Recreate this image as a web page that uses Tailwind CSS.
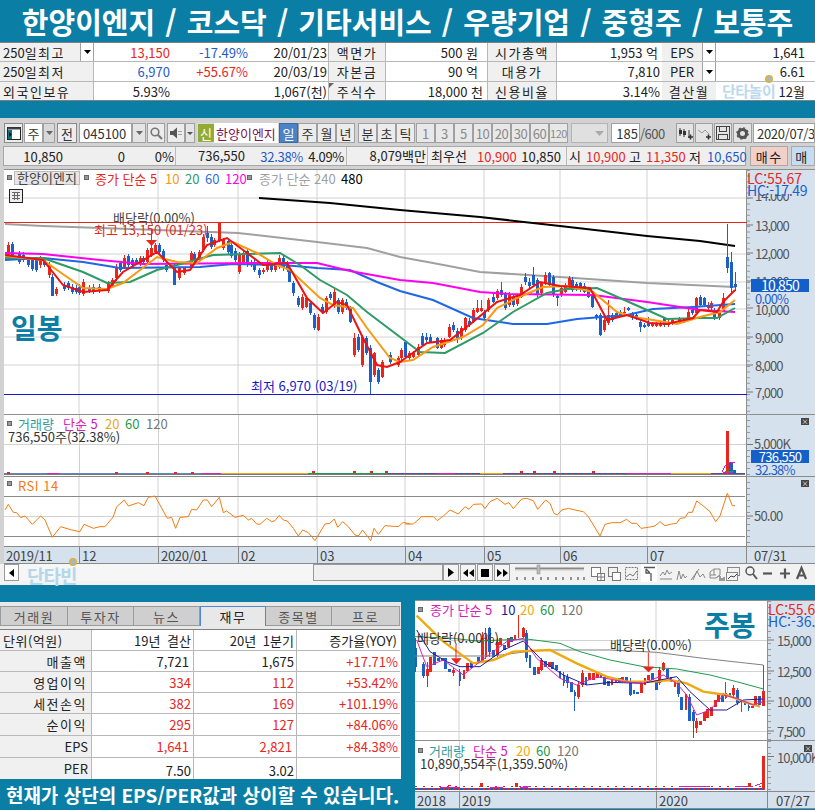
<!DOCTYPE html>
<html lang="ko"><head><meta charset="utf-8"><title>한양이엔지</title>
<script src="https://cdn.jsdelivr.net/npm/@tailwindcss/browser@4"></script></head>
<body class="bg-[#0b7ea5]">
<div class="w-[815px] h-[810px] overflow-hidden flex flex-col bg-[#0b7ea5] font-['Noto_Sans_CJK_KR',sans-serif] text-[13px] leading-none text-[#222]">

<!-- title -->
<div class="h-[42px] shrink-0 flex items-center justify-center text-white font-bold text-[29px] [word-spacing:2px] whitespace-nowrap">한양이엔지 / 코스닥 / 기타서비스 / 우량기업 / 중형주 / 보통주</div>

<!-- summary table -->
<div class="relative h-[59px] shrink-0 bg-white flex flex-col border-t border-[#808080] whitespace-nowrap">
  <div class="flex h-[19px] border-b border-[#b8b8b8]">
    <div class="w-[80px] bg-[#f0f0f0] flex items-center pl-[3px]"><span>250</span><span class="tracking-[1.5px]">일최고</span></div>
    <div class="w-[14px] bg-white border-x border-[#a0a0a0] flex items-center justify-center"><svg width="7" height="4"><polygon points="0,0 7,0 3.5,4" fill="#000"/></svg></div>
    <div class="w-[76px] text-right self-center text-[#e8261c]">13,150</div>
    <div class="w-[78px] text-right self-center text-[#1e5bc6]">-17.49%</div>
    <div class="w-[79px] text-right self-center">20/01/23</div>
    <div class="ml-[1px] w-[58px] bg-[#f0f0f0] border-x border-[#b8b8b8] flex items-center justify-center tracking-[1.5px]">액면가</div>
    <div class="w-[101px] text-right self-center pr-[9px]">500 원</div>
    <div class="w-[70px] bg-[#f0f0f0] border-x border-[#b8b8b8] flex items-center justify-center tracking-[1.5px]">시가총액</div>
    <div class="w-[105px] text-right self-center pr-[4px]">1,953 억</div>
    <div class="w-[40px] bg-[#f0f0f0] flex items-center justify-center">EPS</div>
    <div class="w-[14px] bg-white border-x border-[#a0a0a0] flex items-center justify-center"><svg width="7" height="4"><polygon points="0,0 7,0 3.5,4" fill="#000"/></svg></div>
    <div class="w-[99px] text-right self-center pr-[10px]">1,641</div>
  </div>
  <div class="flex h-[20px] border-b border-[#b8b8b8]">
    <div class="w-[94px] bg-[#f0f0f0] border-r border-[#b8b8b8] flex items-center pl-[3px]"><span>250</span><span class="tracking-[1.5px]">일최저</span></div>
    <div class="w-[76px] text-right self-center text-[#1e5bc6]">6,970</div>
    <div class="w-[78px] text-right self-center text-[#e8261c]">+55.67%</div>
    <div class="w-[79px] text-right self-center">20/03/19</div>
    <div class="ml-[1px] w-[58px] bg-[#f0f0f0] border-x border-[#b8b8b8] flex items-center justify-center tracking-[1.5px]">자본금</div>
    <div class="w-[101px] text-right self-center pr-[9px]">90 억</div>
    <div class="w-[70px] bg-[#f0f0f0] border-x border-[#b8b8b8] flex items-center justify-center tracking-[1.5px]">대용가</div>
    <div class="w-[105px] text-right self-center pr-[2px]">7,810</div>
    <div class="w-[40px] bg-[#f0f0f0] flex items-center justify-center">PER</div>
    <div class="w-[14px] bg-white border-x border-[#a0a0a0] flex items-center justify-center"><svg width="7" height="4"><polygon points="0,0 7,0 3.5,4" fill="#000"/></svg></div>
    <div class="w-[99px] text-right self-center pr-[10px]">6.61</div>
  </div>
  <div class="relative flex h-[19px] border-b border-[#808080]">
    <div class="w-[94px] bg-[#f0f0f0] border-r border-[#b8b8b8] flex items-center pl-[3px] tracking-[1.5px]">외국인보유</div>
    <div class="w-[76px] text-right self-center">5.93%</div>
    <div class="w-[157px] text-right self-center">1,067(천)</div>
    <div class="relative ml-[1px] w-[58px] bg-[#f0f0f0] border-x border-[#b8b8b8] flex items-center justify-center tracking-[1.5px]"><svg class="absolute left-[0px] top-[1px]" width="5" height="5"><polygon points="0,0 5,0 0,5" fill="#666"/></svg>주식수</div>
    <div class="w-[101px] text-right self-center pr-[4px]">18,000 천</div>
    <div class="w-[70px] bg-[#f0f0f0] border-x border-[#b8b8b8] flex items-center justify-center tracking-[1.5px]">신용비율</div>
    <div class="w-[105px] text-right self-center pr-[2px]">3.14%</div>
    <div class="w-[54px] bg-[#f0f0f0] flex items-center justify-center tracking-[1.5px]">결산월</div>
    <div class="w-[99px] text-right self-center pr-[10px]">12월</div>
    <div class="absolute left-[722px] top-[1px] w-[52px] h-[18px] text-[#bcd9ec] font-bold text-[15px] tracking-[-0.5px]">단타놀이</div>
    <div class="absolute left-[765px] top-[-7px] w-[8px] h-[8px] rounded-full border-2 border-[#d9b04e] bg-[#9cb8de]"></div>
  </div>
</div>

<div class="h-[17px] shrink-0"></div>

<!-- app window -->
<div class="h-[467px] shrink-0 bg-[#d2d2d2] flex flex-col pt-[5px]">
  <!-- toolbar -->
  <div class="h-[20px] shrink-0 flex pl-[4px] whitespace-nowrap text-[#333]">
    <div class="w-[19px] border border-[#8a8a8a] bg-[#ececec] flex items-center justify-center"><svg width="14" height="13"><rect x=".5" y=".5" width="13" height="12" fill="#fff" stroke="#222"/><rect x=".5" y=".5" width="13" height="2" fill="#444"/><rect x="1" y="3" width="4" height="9" fill="#178"/><polygon points="2,5 5,7.5 2,10" fill="#111"/></svg></div>
    <div class="ml-[1px] w-[19px] bg-white border border-[#a0a0a0] flex items-center justify-center">주</div>
    <div class="w-[12px] bg-[#d8d8d8] border border-[#a0a0a0] flex items-center justify-center"><svg width="7" height="4"><polygon points="0,0 7,0 3.5,4" fill="#666"/></svg></div>
    <div class="ml-[2px] w-[20px] bg-[#ececec] border border-[#8a8a8a] flex items-center justify-center">전</div>
    <div class="ml-[2px] w-[53px] bg-white border border-[#a0a0a0] flex items-center pl-[3px]">045100</div>
    <div class="w-[14px] bg-[#e4e4e4] border border-[#a0a0a0] flex items-center justify-center"><svg width="7" height="4"><polygon points="0,0 7,0 3.5,4" fill="#666"/></svg></div>
    <div class="ml-[1px] w-[18px] bg-[#ececec] border border-[#a0a0a0] flex items-center justify-center"><svg width="13" height="13" fill="none" stroke="#777" stroke-width="1.6"><circle cx="5" cy="5" r="3.8"/><path d="M8 8l4 4" stroke-width="2.2"/></svg></div>
    <div class="ml-[2px] w-[18px] bg-[#ececec] border border-[#a0a0a0] flex items-center justify-center"><svg width="13" height="12"><path d="M0 4h3l4-3.5v11L3 8H0z" fill="#555"/><path d="M9 4v1M9 7v1M11 4v1M11 7v1" stroke="#555"/></svg></div>
    <div class="w-[10px] bg-[#e4e4e4] border border-[#a0a0a0] flex items-center justify-center"><svg width="6" height="3"><polygon points="0,0 6,0 3,3" fill="#555"/></svg></div>
    <div class="ml-[2px] w-[17px] bg-[#93ab35] text-white flex items-center justify-center border-y border-l border-[#ddd]">신</div>
    <div class="w-[64px] bg-white text-[#7d1450] flex items-center pl-[2px] overflow-hidden">한양이엔지</div>
    <div class="ml-[1px] w-[19px] bg-[#4c82c6] text-white border border-[#3a6aa8] flex items-center justify-center">일</div>
    <div class="w-[19px] bg-[#ececec] border border-[#a0a0a0] flex items-center justify-center">주</div>
    <div class="w-[19px] bg-[#ececec] border border-[#a0a0a0] flex items-center justify-center">월</div>
    <div class="w-[19px] bg-[#ececec] border border-[#a0a0a0] flex items-center justify-center">년</div>
    <div class="ml-[3px] w-[19px] bg-[#ececec] border border-[#a0a0a0] flex items-center justify-center">분</div>
    <div class="w-[19px] bg-[#ececec] border border-[#a0a0a0] flex items-center justify-center">초</div>
    <div class="w-[19px] bg-[#ececec] border border-[#a0a0a0] flex items-center justify-center">틱</div>
    <div class="ml-[1px] w-[19px] bg-[#e8e8e8] border border-[#a0a0a0] text-[#888] flex items-center justify-center">1</div>
    <div class="w-[19px] bg-[#e8e8e8] border border-[#a0a0a0] text-[#888] flex items-center justify-center">3</div>
    <div class="w-[19px] bg-[#e8e8e8] border border-[#a0a0a0] text-[#888] flex items-center justify-center">5</div>
    <div class="w-[19px] bg-[#e8e8e8] border border-[#a0a0a0] text-[#888] flex items-center justify-center tracking-[-.5px]">10</div>
    <div class="w-[19px] bg-[#e8e8e8] border border-[#a0a0a0] text-[#888] flex items-center justify-center tracking-[-.5px]">20</div>
    <div class="w-[19px] bg-[#e8e8e8] border border-[#a0a0a0] text-[#888] flex items-center justify-center tracking-[-.5px]">30</div>
    <div class="w-[19px] bg-[#e8e8e8] border border-[#a0a0a0] text-[#888] flex items-center justify-center tracking-[-.5px]">60</div>
    <div class="w-[19px] bg-[#e8e8e8] border border-[#a0a0a0] text-[#888] flex items-center justify-center text-[11px] tracking-[-.5px]">120</div>
    <div class="ml-[3px] w-[37px] bg-[#e0e0e0] border border-[#b4b4b4] flex items-center justify-end pr-[3px]"><svg width="9" height="5"><polygon points="0,0 9,0 4.5,5" fill="#aaa"/></svg></div>
    <div class="ml-[3px] w-[29px] bg-white border border-[#a0a0a0] flex items-center justify-end pr-[1px]">185</div>
    <div class="w-[24px] flex items-center text-[#555] tracking-[-.5px]">/600</div>
    <div class="ml-[12px] w-[18px] bg-[#e4e4e4] border border-[#a0a0a0] flex items-center justify-center"><svg width="15" height="13"><path d="M2 1v8M6 2v8M11 3v8" stroke="#333"/><rect x="1" y="3" width="3" height="4" fill="#333"/><rect x="5" y="4" width="3" height="4" fill="#333"/><path d="M10 10h5M12.500 7.500v5" stroke="#333" stroke-width="1.600"/></svg></div>
    <div class="ml-[1px] w-[18px] bg-[#e4e4e4] border border-[#a0a0a0] flex items-center justify-center"><svg width="15" height="13" fill="none"><path d="M1 3l4 3 3-3 4 4" stroke="#999"/><path d="M9 10h5M11.500 7.500v5" stroke="#333" stroke-width="1.600"/></svg></div>
    <div class="ml-[1px] w-[18px] bg-[#e4e4e4] border border-[#a0a0a0] flex items-center justify-center"><svg width="14" height="14" fill="none" stroke="#444"><rect x=".5" y=".5" width="13" height="13"/><rect x="3.500" y=".5" width="7" height="5"/><rect x="2.500" y="8.500" width="9" height="5"/></svg></div>
    <div class="ml-[1px] w-[19px] bg-[#e4e4e4] border border-[#a0a0a0] flex items-center justify-center"><svg width="13" height="13"><circle cx="6.500" cy="6.500" r="4" fill="none" stroke="#555" stroke-width="3"/><circle cx="6.500" cy="6.500" r="5.500" fill="none" stroke="#555" stroke-width="1.600" stroke-dasharray="2 2.300"/></svg></div>
    <div class="ml-[1px] w-[62px] bg-white border border-[#a0a0a0] flex items-center pl-[3px] overflow-hidden tracking-[-.3px]">2020/07/31</div>
  </div>

  <!-- quote strip -->
  <div class="mt-[3px] h-[20px] shrink-0 flex pl-[3px] whitespace-nowrap">
    <div class="w-[749px] bg-[#efefef] border border-[#a8a8a8] flex items-center">
      <span class="w-[59px] text-right">10,850</span>
      <span class="w-[62px] text-right">0</span>
      <span class="w-[49px] text-right">0%</span>
      <span class="ml-[1px] h-full border-l border-[#bbb] w-[70px] text-right leading-[18px]">736,550</span>
      <span class="w-[58px] text-right text-[#1e5bc6] tracking-[-.3px]">32.38%</span>
      <span class="w-[41px] text-right tracking-[-.3px]">4.09%</span>
      <span class="ml-[2px] h-full border-l border-[#bbb] w-[80px] text-right leading-[18px]">8,079백만</span>
      <span class="ml-[1px] h-full border-l border-[#bbb] pl-[3px] w-[50px] leading-[18px]">최우선</span>
      <span class="w-[34px] text-[#e8261c]">10,900</span>
      <span class="w-[50px] text-right">10,850</span>
      <span class="ml-[5px] h-full border-l border-[#bbb] pl-[2px] w-[20px] leading-[18px]">시</span>
      <span class="w-[34px] text-[#e8261c]">10,900</span>
      <span class="ml-[9px] w-[17px]">고</span>
      <span class="w-[35px] text-[#e8261c]">11,350</span>
      <span class="ml-[8px] w-[18px]">저</span>
      <span class="w-[35px] text-[#1e5bc6]">10,650</span>
    </div>
    <div class="ml-[4px] w-[38px] bg-[#f2cfc8] border border-[#a8a8a8] flex items-center justify-center tracking-[1.5px]">매수</div>
    <div class="ml-[3px] w-[24px] bg-[#c6dcf3] border border-[#a8a8a8] flex items-center pl-[3px]">매</div>
  </div>

  <!-- daily price panel -->
  <div class="relative mt-[3px] h-[245px] shrink-0 flex pl-[4px]">
    <div class="w-[743px] bg-white"></div>
    <div class="flex-1 bg-[#d6e1ee]"></div>
    <svg class="absolute left-0 top-0" width="815" height="245" viewBox="0 169 815 245" fill="none">
      <path d="M4 198H747M4 254H747M4 282H747M4 309H747M4 337H747M4 365H747M79 169V414M158 169V414M238 169V414M317 169V414M405 169V414M484 169V414M560 169V414M647 169V414" stroke="#d2d2d2"/>
      <path d="M4 169.500H815M746.500 169V414" stroke="#8e8e8e"/>
      <path d="M4 222.500H747" stroke="#e8261c"/><path d="M4 394.500H747" stroke="#1818c8"/>
      <path d="M747 198h6M747 225h6M747 253h6M747 281h6M747 308h6M747 337h6M747 365h6M747 392h6" stroke="#777"/>
      <path d="M748.500 170V414" stroke="#999" stroke-width="3" stroke-dasharray="1 4.600"/>
      <polyline stroke="#000" stroke-width="2" points="259,198 330,203 400,210 480,217 560,226 647,236 700,241 735,246"/>
      <polyline stroke="#a0a0a0" stroke-width="2" points="5,224 43,226 130,229 238,233 317,242 367,248 400,257 433,263 480,272 560,277 647,283 735,287"/>
      <g stroke-linecap="butt" shape-rendering="crispEdges">
      <g transform="translate(0 165) scale(.33333)">
        <path stroke="#e8261c" stroke-width="3" d="M25 232V283M122 272V308M150 290V340M170 365V392M250 342V392M325 348V384M337 338V368M350 298V348M373 270V312M422 272V302M442 248V298M455 240V275M466 235V268M540 305V345M555 305V330M575 258V312M598 255V290M610 208V262M645 218V246M658 172V232M670 218V255M718 260V328M730 258V298M790 308V328M803 282V322M828 292V320M838 270V312M907 388V436M920 392V430M955 448V498M980 392V446M1003 372V428M1028 400V446M1063 505V575M1088 510V605M1124 560V636M1148 585V640M1195 572V606"/>
        <path stroke="#1c5fc8" stroke-width="3" d="M37 232V276M60 258V296M72 262V292M85 278V306M97 278V318M110 278V322M135 278V306M157 328V392M195 350V378M207 348V376M218 358V386M230 360V386M240 358V390M268 360V384M280 358V386M300 358V384M362 288V322M385 268V306M397 278V306M410 278V300M432 272V296M478 235V268M490 252V290M500 292V320M525 298V360M585 262V292M622 183V232M635 208V252M685 222V266M695 232V278M708 250V292M742 250V306M755 284V306M765 282V320M778 308V338M815 288V320M850 272V318M862 288V322M870 304V352M882 348V392M895 392V426M932 408V450M943 445V495M967 418V446M992 382V406M1016 398V446M1040 402V436M1052 424V475M1076 508V560M1100 512V570M1112 540V687M1136 608V658M1172 562V596"/>
        <path stroke="#e8261c" stroke-width="9" d="M25 240V275M122 282V300M150 300V330M170 372V388M250 350V388M325 355V378M337 345V362M350 305V340M373 278V305M422 280V295M442 255V290M455 250V270M466 240V262M540 310V338M555 310V325M575 265V305M598 262V285M610 215V255M645 225V240M658 172V225M670 225V248M718 268V320M730 265V292M790 315V322M803 290V315M828 300V315M838 278V305M907 395V430M920 400V425M955 455V495M980 400V440M1003 380V420M1028 405V440M1063 520V570M1088 515V600M1124 565V630M1148 590V635M1195 580V600"/>
        <path stroke="#1c5fc8" stroke-width="9" d="M37 238V270M60 265V290M72 270V285M85 285V300M97 285V312M110 285V315M135 285V300M157 335V392M195 360V372M207 355V370M218 365V380M230 368V380M240 365V385M268 368V378M280 365V380M300 365V378M362 295V315M385 272V300M397 285V300M410 285V295M432 280V290M478 240V262M490 258V285M500 300V315M525 305V360M585 268V285M622 205V218M635 215V245M685 228V260M695 240V272M708 258V285M742 258V300M755 290V300M765 290V315M778 315V330M815 295V315M850 278V310M862 295V315M870 310V350M882 355V385M895 400V420M932 415V445M943 450V490M967 425V440M992 388V400M1016 405V440M1040 410V430M1052 430V470M1076 515V555M1100 520V565M1112 550V650M1136 615V650M1172 570V590"/>
      </g>
      <g transform="translate(400 165) scale(.33333)">
        <path stroke="#e8261c" stroke-width="3" d="M5 550V585M30 558V584M42 558V580M55 538V575M125 518V552M135 518V545M150 478V520M185 482V525M197 455V500M220 430V475M232 405V445M245 405V442M267 398V440M292 372V405M328 380V425M352 392V422M364 358V400M424 350V390M436 322V360M484 365V395M496 355V385M508 332V370M613 458V500M625 405V480M673 425V450M757 470V485M770 470V485M782 472V485M805 462V485M818 460V480M840 455V475M865 430V462M890 395V450M925 412V435M935 408V435M958 435V465M970 385V442"/>
        <path stroke="#1c5fc8" stroke-width="3" d="M18 525V582M68 505V545M80 505V530M92 508V535M112 515V552M160 472V500M172 490V535M208 460V485M255 435V465M280 388V415M305 352V395M318 380V435M340 388V425M376 325V360M388 340V368M400 305V365M412 338V395M448 320V365M460 330V395M472 390V422M518 335V380M530 352V378M542 350V380M554 355V385M565 365V400M578 385V428M590 448V465M601 445V512M637 445V470M650 440V460M662 435V455M685 425V438M697 440V465M710 445V465M721 465V500M733 475V490M745 455V485M795 455V485M855 458V475M878 428V450M902 390V425M913 395V425M945 428V465M982 178V325M995 262V380M1006 322V378"/>
        <path stroke="#e8261c" stroke-width="9" d="M5 555V580M30 565V578M42 565V575M55 545V570M125 525V548M135 525V540M150 485V515M185 490V520M197 460V495M220 435V470M232 430V440M245 430V438M267 405V435M292 378V400M328 390V420M352 400V418M364 365V395M424 355V385M436 330V355M484 370V390M496 360V380M508 338V365M613 465V495M625 450V475M673 440V445M757 475V482M770 475V482M782 475V482M805 470V480M818 465V475M840 460V470M865 440V458M890 400V445M925 420V430M935 415V430M958 440V460M970 398V438"/>
        <path stroke="#1c5fc8" stroke-width="9" d="M18 530V575M68 513V540M80 515V525M92 515V530M112 520V550M160 480V495M172 497V520M208 468V480M255 440V458M280 395V410M305 375V390M318 385V430M340 395V420M376 335V350M388 350V362M400 330V360M412 345V390M448 325V360M460 335V390M472 394V398M518 345V375M530 358V372M542 355V375M554 362V380M565 372V395M578 390V425M590 450V456M601 450V510M637 450V465M650 445V455M662 440V450M685 428V435M697 445V460M710 450V460M721 470V487M733 480V485M745 470V482M795 460V480M855 462V470M878 435V445M902 397V420M913 400V420M945 435V460M982 275V310M995 292V368M1006 358V366"/>
      </g>
      </g>
      <polyline stroke="#1f66e6" stroke-width="2" points="5,260 43,258 83,262 120,268 200,267 233,264 283,265 317,268 350,270 377,282 400,291 433,300 473,318 513,324 547,324 577,319 627,315 653,309 693,307 735,304"/>
      <polyline stroke="#ff00ee" stroke-width="2" points="5,253 43,254 100,260 143,264 267,263 317,263 350,271 400,280 433,283 480,292 510,294 593,295 647,302 700,310 735,312"/>
      <polyline stroke="#2e9a66" stroke-width="2" points="5,258 43,258 57,263 83,272 107,283 130,282 157,270 177,265 213,255 280,253 300,265 320,280 347,295 367,312 400,337 420,352 445,353 483,333 513,312 547,293 567,289 597,288 613,295 647,310 667,319 700,318 717,318 735,308"/>
      <polyline stroke="#f79a10" stroke-width="2" points="5,256 43,260 57,270 83,288 107,289 123,283 157,257 177,262 197,263 217,248 233,242 257,253 277,265 290,270 320,298 333,305 353,308 367,328 390,358 400,362 413,360 433,347 463,337 483,325 497,308 517,298 543,287 567,286 593,292 617,312 633,317 653,320 677,324 700,317 720,312 735,300"/>
      <polyline stroke="#ee1111" stroke-width="2" points="5,255 43,260 63,285 83,292 107,290 123,272 157,252 177,272 190,270 207,245 227,238 243,250 263,265 287,263 307,298 323,313 337,302 347,305 363,338 377,365 387,367 400,362 407,357 427,343 450,340 473,322 497,302 520,295 540,282 560,286 590,288 607,320 627,315 650,323 667,324 693,318 700,310 717,312 723,302 735,290"/>
      <path d="M151.500 230V240" stroke="#e8261c"/><polygon points="146,240 157,240 151.500,246" fill="#e8261c"/>
    </svg>
    <i class="absolute left-[7px] top-[6px] w-[5px] h-[5px] bg-[#999] border border-[#666]"></i>
    <span class="absolute left-[14px] top-[2px] w-[66px] h-[14px] bg-[#e6e6e6] border border-[#bbb] text-center text-[#444] leading-[12px]">한양이엔지</span>
    <i class="absolute left-[84px] top-[6px] w-[5px] h-[5px] bg-[#999] border border-[#666]"></i>
    <span class="absolute left-[95px] top-[3px] text-[#e8261c]">종가 단순 5</span>
    <span class="absolute left-[165px] top-[3px] text-[#f79a10]">10</span>
    <span class="absolute left-[185px] top-[3px] text-[#2e9a66]">20</span>
    <span class="absolute left-[205px] top-[3px] text-[#2f6fe0]">60</span>
    <span class="absolute left-[225px] top-[3px] text-[#ff00ee]">120</span>
    <i class="absolute left-[247px] top-[6px] w-[5px] h-[5px] bg-[#999] border border-[#666]"></i>
    <span class="absolute left-[259px] top-[3px] text-[#a0a0a0]">종가 단순 240</span>
    <span class="absolute left-[341px] top-[3px] text-black">480</span>
    <svg class="absolute left-[9px] top-[20px]" width="14" height="14"><rect x=".5" y=".5" width="13" height="13" fill="#eee" stroke="#222"/><path d="M3 3.500h8M3 6.500h8M3 9.500h8M5.500 3v8M8.500 3v8" stroke="#666"/></svg>
    <span class="absolute left-[113px] top-[42px] text-[#444] whitespace-nowrap">배당락(0.00%)</span>
    <span class="absolute left-[94px] top-[54px] text-[#e8261c] whitespace-nowrap">최고 13,150 (01/23)</span>
    <span class="absolute left-[251px] top-[210px] text-[#1818c8] whitespace-nowrap">최저 6,970 (03/19)</span>
    <span class="absolute left-[11px] top-[144px] text-[#0b7ea5] font-bold text-[28px]">일봉</span>
    <span class="absolute left-[747px] top-[2px] text-[14px] text-[#e8261c] whitespace-nowrap">LC:55.67</span>
    <span class="absolute left-[747px] top-[14px] text-[14px] text-[#1c5fc8] whitespace-nowrap tracking-[-.3px]">HC:-17.49</span>
    <span class="absolute left-[755px] top-[25px] h-[7px] overflow-hidden text-[13px] tracking-[-1px] text-[#555]"><span class="block -mt-[5px]">14,000</span></span>
    <span class="absolute left-[755px] top-[50px] text-[13px] tracking-[-1px] text-[#555]">13,000</span>
    <span class="absolute left-[755px] top-[78px] text-[13px] tracking-[-1px] text-[#555]">12,000</span>
    <span class="absolute left-[755px] top-[106px] h-[4px] overflow-hidden text-[13px] tracking-[-1px] text-[#555]">11,000</span>
    <span class="absolute left-[751px] top-[110px] w-[58px] h-[13px] bg-[#1560c8] text-white text-[14px] tracking-[-.8px] text-center leading-[13px]">10,850</span>
    <span class="absolute left-[755px] top-[123px] text-[13px] tracking-[-.8px] text-[#1c5fc8]">0.00%</span>
    <span class="absolute left-[755px] top-[134px] text-[13px] tracking-[-1px] text-[#555]">10,000</span>
    <span class="absolute left-[755px] top-[162px] text-[13px] tracking-[-1px] text-[#555]">9,000</span>
    <span class="absolute left-[755px] top-[190px] text-[13px] tracking-[-1px] text-[#555]">8,000</span>
    <span class="absolute left-[755px] top-[217px] text-[13px] tracking-[-1px] text-[#555]">7,000</span>
  </div>

  <!-- volume panel -->
  <div class="relative h-[62px] shrink-0 flex pl-[4px]">
    <div class="w-[743px] bg-white"></div>
    <div class="flex-1 bg-[#d6e1ee]"></div>
    <svg class="absolute left-0 top-0" width="815" height="62" viewBox="0 414 815 62" fill="none" shape-rendering="crispEdges">
      <path d="M4 444H747M79 414V476M158 414V476M238 414V476M317 414V476M405 414V476M484 414V476M560 414V476M647 414V476" stroke="#d2d2d2"/>
      <path d="M4 414.500H815M746.500 414V476" stroke="#8e8e8e"/><path d="M4 474.500H745" stroke="#7a7a7a"/>
      <path d="M748.500 414V476" stroke="#999" stroke-width="3" stroke-dasharray="1 5"/>
      <path d="M747 444h6" stroke="#777"/>
      <path d="M4 473.500H388" stroke="#5b86c8"/>
      <path d="M388 473.500H745" stroke="#1c5fc8" stroke-dasharray="3 3"/>
      <path d="M388 473.500H745" stroke="#e8261c" stroke-dasharray="3 3" stroke-dashoffset="3"/>
      <path d="M47 473h12M201 473h20M437 473h18M627 473h44" stroke="#d820b8"/>
      <path d="M221 473h87M480 473h23M671 473h40" stroke="#e8a818"/>
      <path d="M308 473h80" stroke="#1f9a4a"/>
      <path d="M7 473h3M115 473h3M146 473h3M174 473h3M191 473h3M312 472h3M353 472h3M370 472h3M385 472h3M520 472h3M533 472h3M553 472h3M592 472h3" stroke="#e8261c" stroke-width="2"/>
      <rect x="726" y="431" width="3" height="43" fill="#e8261c"/><rect x="729" y="462" width="4" height="12" fill="#1c5fc8"/><rect x="733" y="470" width="3" height="4" fill="#1c5fc8"/>
      <path d="M722 472l3-6 4-4h6M723 472h10" stroke="#d820b8"/><path d="M725 471h9" stroke="#1f9a4a"/>
    </svg>
    <i class="absolute left-[7px] top-[7px] w-[5px] h-[5px] bg-[#999] border border-[#666]"></i>
    <span class="absolute left-[18px] top-[3px] text-[#2f9c9c]">거래량</span>
    <span class="absolute left-[63px] top-[3px] text-[#d820b8]">단순 5</span>
    <span class="absolute left-[105px] top-[3px] text-[#e8a818]">20</span>
    <span class="absolute left-[125px] top-[3px] text-[#1f9a4a]">60</span>
    <span class="absolute left-[146px] top-[3px] text-[#777]">120</span>
    <span class="absolute left-[8px] top-[16px] text-[#333] whitespace-nowrap">736,550주(32.38%)</span>
    <span class="absolute left-[801px] top-[4px] w-[8px] h-[7px] bg-[#444] text-white text-[7px] leading-[7px] text-center">×</span>
    <span class="absolute left-[754px] top-[23px] text-[13px] tracking-[-.8px] text-[#555]">5,000K</span>
    <span class="absolute left-[751px] top-[36px] w-[58px] h-[13px] bg-[#1560c8] text-white text-[13px] tracking-[-.6px] text-center leading-[13px]">736,550</span>
    <span class="absolute left-[755px] top-[49px] text-[13px] tracking-[-.8px] text-[#1c5fc8]">32.38%</span>
  </div>

  <!-- RSI panel -->
  <div class="relative h-[70px] shrink-0 flex pl-[4px]">
    <div class="w-[743px] bg-white"></div>
    <div class="flex-1 bg-[#d6e1ee]"></div>
    <svg class="absolute left-0 top-0" width="815" height="70" viewBox="0 476 815 70" fill="none">
      <path d="M79 476V546M158 476V546M238 476V546M317 476V546M405 476V546M484 476V546M560 476V546M647 476V546M4 516.500H745" stroke="#d2d2d2"/>
      <path d="M4 476.500H815M746.500 476V546M4 496.500H745M4 536.500H745" stroke="#8a8a8a"/>
      <path d="M747 516h6" stroke="#777"/><path d="M748.500 476V546" stroke="#999" stroke-width="3" stroke-dasharray="1 5"/>
      <g stroke="#f47a10" stroke-width="3" transform="translate(0 410) scale(.33333)">
      <polyline points="15,300 25,283 40,307 50,308 62,323 75,318 97,343 122,318 135,330 157,382 182,350 215,360 240,365 252,343 280,355 300,350 315,350 340,320 350,290 373,270 385,288 415,278 432,287 445,262 465,258 480,285 502,325 515,322 527,355 540,322 565,320 575,298 590,300 610,270 622,270 635,290 658,262 670,308 680,303 705,322 730,316 745,330 755,325 770,342 780,343 800,325 815,335 825,332 838,316 850,330 862,333 880,355 895,378 908,360 925,368 945,392 975,342 990,340 1003,327 1013,352 1028,335 1045,350 1065,375 1075,378 1088,360 1112,392 1122,355 1135,373 1155,347 1195,350 1210,337 1230,342"/>
      <polyline transform="translate(1215 0)" points="0,342 25,342 50,320 85,320 97,332 115,318 135,300 160,312 180,290 192,298 205,283 230,282 240,296 255,275 277,265 300,283 312,278 325,296 350,267 365,265 385,272 398,298 422,270 435,280 447,310 457,315 470,300 490,295 510,300 535,305 550,320 585,378 600,343 620,338 645,338 665,328 680,340 695,340 708,355 730,352 750,348 765,335 780,347 800,342 815,340 825,325 840,323 850,307 862,307 875,273 895,288 915,305 932,335 945,318 967,250 982,287 990,287"/>
      </g>
    </svg>
    <i class="absolute left-[7px] top-[5px] w-[5px] h-[5px] bg-[#999] border border-[#666]"></i>
    <span class="absolute left-[18px] top-[3px] text-[#f47a10] tracking-[.5px]">RSI 14</span>
    <span class="absolute left-[801px] top-[4px] w-[8px] h-[7px] bg-[#444] text-white text-[7px] leading-[7px] text-center">×</span>
    <span class="absolute left-[754px] top-[33px] text-[13px] tracking-[-.8px] text-[#555]">50.00</span>
  </div>

  <!-- x axis -->
  <div class="relative h-[18px] shrink-0 ml-[4px] bg-[#d6e1ee] border-y border-[#8a8a8a] text-[#444] whitespace-nowrap">
    <span class="absolute left-[2px] top-[2px] tracking-[-.3px]">2019/11</span>
    <span class="absolute left-[75px] top-0 h-full pl-[2px] pt-[2px] border-l border-[#8a8a8a]">12</span>
    <span class="absolute left-[154px] top-0 h-full pl-[2px] pt-[2px] border-l border-[#8a8a8a] tracking-[-.3px]">2020/01</span>
    <span class="absolute left-[234px] top-0 h-full pl-[2px] pt-[2px] border-l border-[#8a8a8a]">02</span>
    <span class="absolute left-[313px] top-0 h-full pl-[2px] pt-[2px] border-l border-[#8a8a8a]">03</span>
    <span class="absolute left-[401px] top-0 h-full pl-[2px] pt-[2px] border-l border-[#8a8a8a]">04</span>
    <span class="absolute left-[480px] top-0 h-full pl-[2px] pt-[2px] border-l border-[#8a8a8a]">05</span>
    <span class="absolute left-[556px] top-0 h-full pl-[2px] pt-[2px] border-l border-[#8a8a8a]">06</span>
    <span class="absolute left-[643px] top-0 h-full pl-[2px] pt-[2px] border-l border-[#8a8a8a]">07</span>
    <span class="absolute left-[742px] top-0 h-full pl-[7px] pt-[2px] border-l border-[#8a8a8a] tracking-[-.3px]">07/31</span>
  </div>

  <!-- scroll and tools -->
  <div class="relative flex-1 flex pl-[4px] bg-[#f2f2f2]">
    <div class="w-[15px] h-[17px] bg-white border border-[#9a9a9a] flex items-center justify-center"><svg width="5" height="8"><polygon points="5,0 5,8 0,4" fill="#000"/></svg></div>
    <div class="relative w-[294px] h-[17px] bg-[#f6f6f6]">
      <span class="absolute left-[8px] top-[2px] text-[#b4d8ea] font-bold text-[19px] tracking-[-1px]">단타빈</span>
      <i class="absolute left-[50px] top-[-6px] w-[8px] h-[8px] rounded-full border-2 border-[#d9b04e] bg-[#9cb8de]"></i>
    </div>
    <div class="w-[130px] h-[17px] bg-[#f0f0f0] border border-[#9a9a9a]"></div>
    <div class="w-[16px] h-[17px] bg-[#f4f4f4] border border-[#9a9a9a] flex items-center justify-center"><svg width="6" height="9"><polygon points="0,0 6,4.500 0,9" fill="#000"/></svg></div>
    <div class="ml-[1px] w-[16px] h-[17px] bg-[#f4f4f4] border border-[#9a9a9a] flex items-center justify-center"><svg width="11" height="8"><polygon points="5,0 5,8 0,4" fill="#000"/><polygon points="11,0 11,8 6,4" fill="#000"/></svg></div>
    <div class="ml-[1px] w-[16px] h-[17px] bg-[#f4f4f4] border border-[#9a9a9a] flex items-center justify-center"><svg width="8" height="8"><rect width="8" height="8" fill="#000"/></svg></div>
    <div class="ml-[1px] w-[16px] h-[17px] bg-[#f4f4f4] border border-[#9a9a9a] flex items-center justify-center"><svg width="11" height="8"><polygon points="0,0 0,8 5,4" fill="#000"/><polygon points="6,0 6,8 11,4" fill="#000"/></svg></div>
    <svg class="ml-[4px] shrink-0" width="298" height="20" fill="none">
      <path d="M1 4.500H70" stroke="#888" stroke-width="2"/><path d="M1 6H70" stroke="#ccc"/>
      <rect x="23" y="1" width="3" height="9" fill="#bbb" stroke="#888" stroke-width=".5"/>
      <path d="M3 13v3M11 13v3M19 13v3M27 13v3M34 13v3M42 13v3M49 13v3M57 13v3M64 13v3M70 13v3" stroke="#333"/>
      <g stroke="#777"><rect x="77.500" y="3.500" width="9" height="9" fill="#fff"/><rect x="83.500" y="9.500" width="7" height="7" fill="#fff"/><path d="M87 10v6M84 13h6"/><rect x="94.500" y="3.500" width="9" height="9"/><rect x="98.500" y="8.500" width="8" height="8" fill="#fff"/><rect x="111.500" y="3.500" width="12" height="12" stroke-dasharray="2 1"/><path d="M112 13l4-3 3 2 4-5"/></g>
      <rect x="127" y="0" width="16" height="18" fill="#fff"/>
      <path d="M130 3.500h11M132 5l4 4M132 5v4h4M137 9v8" stroke="#555" stroke-width="1.300"/>
      <g stroke="#888"><path d="M146 12l3-4 2 3 2-5 2 4 3-2M146 15h12"/><path d="M163 16l2-9 2 8 2-5 2 4 2-2"/><path d="M179 16l4-9 3 6 3-3 2 4M177 16l8-11"/><path d="M196 8l4-3 6 0v6l-4 3h-6zM200 5v6M196 11h6M206 11l-4 3"/><path d="M206 12v5M208 14v3M210 13v4" stroke="#444"/><rect x="213.500" y="3.500" width="12" height="8"/><rect x="212.500" y="8.500" width="11" height="8" fill="#f2f2f2"/><path d="M214 15l3-3 3 1 3-3" stroke="#444"/></g>
      <circle cx="236" cy="7" r="4" stroke="#555" stroke-width="1.500"/><path d="M239 10l4 5" stroke="#555" stroke-width="2"/>
      <path d="M249 9.500h9" stroke="#555" stroke-width="2.200"/>
      <path d="M266 9.500h10M271 4.500v10" stroke="#555" stroke-width="2.200"/>
      <path d="M283 15l4.500-11 4.500 11M285 11.500h5" stroke="#555" stroke-width="2.200"/>
    </svg>
  </div>
</div>

<!-- bottom -->
<div class="flex-1 flex min-h-0">
  <!-- financial table -->
  <div class="w-[401px] pt-[17px] flex flex-col">
    <div class="h-[27px] bg-[#e8e8e8] pt-[4px] shrink-0">
      <div class="h-[20px] flex text-[#555] tracking-[1.5px]">
        <div class="w-[68px] bg-[#cfcfcf] border border-[#9a9a9a] flex items-center justify-center">거래원</div>
        <div class="w-[66px] bg-[#cfcfcf] border-y border-r border-[#9a9a9a] flex items-center justify-center">투자자</div>
        <div class="w-[66px] bg-[#cfcfcf] border-y border-r border-[#9a9a9a] flex items-center justify-center">뉴스</div>
        <div class="w-[66px] bg-[#e8e8e8] border-x border-t border-[#4a8ad4] text-[#222] flex items-center justify-center">재무</div>
        <div class="w-[66px] bg-[#cfcfcf] border-y border-r border-[#9a9a9a] flex items-center justify-center">종목별</div>
        <div class="w-[68px] bg-[#cfcfcf] border-y border-r border-[#9a9a9a] flex items-center justify-center">프로</div>
      </div>
    </div>
    <div class="h-[150px] shrink-0 bg-white border-t border-[#808080] grid grid-cols-[92px_102px_103px_103px] grid-rows-[21px_21px_21px_21px_22px_22px_21px] whitespace-nowrap">
      <div class="bg-[#f0f0f0] border-r border-b border-[#b8b8b8] flex items-center pl-[3px] tracking-[.5px]">단위(억원)</div>
      <div class="border-r border-b border-[#b8b8b8] flex items-center justify-end pr-[2px] [word-spacing:3px]">19년 결산</div>
      <div class="border-r border-b border-[#b8b8b8] flex items-center justify-end pr-[2px] [word-spacing:3px]">20년 1분기</div>
      <div class="border-b border-[#b8b8b8] flex items-center justify-end pr-[3px]">증가율(YOY)</div>

      <div class="bg-[#f0f0f0] border-r border-b border-[#b8b8b8] flex items-center justify-end pr-[4px] tracking-[1.500px]">매출액</div>
      <div class="border-r border-b border-[#b8b8b8] flex items-center justify-end pr-[4px]">7,721</div>
      <div class="border-r border-b border-[#b8b8b8] flex items-center justify-end pr-[2px]">1,675</div>
      <div class="border-b border-[#b8b8b8] flex items-center justify-end pr-[2px] text-[#e8261c]">+17.71%</div>

      <div class="bg-[#f0f0f0] border-r border-b border-[#b8b8b8] flex items-center justify-end pr-[4px] tracking-[1.500px]">영업이익</div>
      <div class="border-r border-b border-[#b8b8b8] flex items-center justify-end pr-[2px] text-[#e8261c]">334</div>
      <div class="border-r border-b border-[#b8b8b8] flex items-center justify-end pr-[2px] text-[#e8261c]">112</div>
      <div class="border-b border-[#b8b8b8] flex items-center justify-end pr-[2px] text-[#e8261c]">+53.42%</div>

      <div class="bg-[#f0f0f0] border-r border-b border-[#b8b8b8] flex items-center justify-end pr-[4px] tracking-[1.500px]">세전손익</div>
      <div class="border-r border-b border-[#b8b8b8] flex items-center justify-end pr-[2px] text-[#e8261c]">382</div>
      <div class="border-r border-b border-[#b8b8b8] flex items-center justify-end pr-[2px] text-[#e8261c]">169</div>
      <div class="border-b border-[#b8b8b8] flex items-center justify-end pr-[2px] text-[#e8261c]">+101.19%</div>

      <div class="bg-[#f0f0f0] border-r border-b border-[#b8b8b8] flex items-center justify-end pr-[4px] tracking-[1.500px]">순이익</div>
      <div class="border-r border-b border-[#b8b8b8] flex items-center justify-end pr-[2px] text-[#e8261c]">295</div>
      <div class="border-r border-b border-[#b8b8b8] flex items-center justify-end pr-[2px] text-[#e8261c]">127</div>
      <div class="border-b border-[#b8b8b8] flex items-center justify-end pr-[2px] text-[#e8261c]">+84.06%</div>

      <div class="bg-[#f0f0f0] border-r border-b border-[#b8b8b8] flex items-center justify-end pr-[3px]">EPS</div>
      <div class="border-r border-b border-[#b8b8b8] flex items-center justify-end pr-[4px] text-[#e8261c]">1,641</div>
      <div class="border-r border-b border-[#b8b8b8] flex items-center justify-end pr-[4px] text-[#e8261c]">2,821</div>
      <div class="border-b border-[#b8b8b8] flex items-center justify-end pr-[2px] text-[#e8261c]">+84.38%</div>

      <div class="bg-[#f0f0f0] border-r border-[#b8b8b8] flex items-center justify-end pr-[3px]">PER</div>
      <div class="border-r border-[#b8b8b8] flex items-center justify-end pr-[2px] pt-[3px]">7.50</div>
      <div class="border-r border-[#b8b8b8] flex items-center justify-end pr-[2px] pt-[3px]">3.02</div>
      <div></div>
    </div>
    <div class="h-[31px] shrink-0 flex items-center justify-center pl-[4px] text-white font-bold text-[19px] whitespace-nowrap">현재가 상단의 EPS/PER값과 상이할 수 있습니다.</div>
  </div>

  <!-- weekly chart -->
  <div class="ml-[14px] w-[400px] pt-[15px] flex flex-col">
    <div class="relative h-[141px] shrink-0 flex">
      <div class="w-[353px] bg-white"></div>
      <div class="flex-1 bg-[#d6e1ee]"></div>
      <svg class="absolute left-0 top-0" width="400" height="141" viewBox="415 600 400 141" fill="none">
        <path d="M459 600V741M656 600V741M415 640.500H768M415 671.500H768M415 701.500H768M415 731.500H768" stroke="#d2d2d2"/>
        <path d="M415 600.500H815M767.500 600V741M415 740.500H815" stroke="#8e8e8e"/>
        <path d="M768 640h6M768 671h6M768 701h6M768 731h6" stroke="#777"/><path d="M769.500 601V741" stroke="#999" stroke-width="3" stroke-dasharray="1 5"/>
        <g transform="translate(410 595) scale(.33333)">
          <g shape-rendering="crispEdges">
          <path stroke="#e8261c" stroke-width="3" d="M52 200V275M130 218V242M327 60V130M228 100V192M395 190V228M505 262V312M517 225V275M748 215V270M760 202V228M860 370V415M948 262V312M970 270V305M995 315V352M1060 210V332M217 110V205M262 130V185M340 95V130"/>
          <path stroke="#1c5fc8" stroke-width="3" d="M18 130V232M40 200V248M150 222V272M238 95V185M350 105V200M462 232V272M473 238V278M495 285V347M662 250V302M806 255V305M838 298V378M850 345V428M983 280V330M1017 325V347"/>
          <path stroke="#e8261c" stroke-width="8" d="M52 222V242M62 185V232M130 225V235M162 225V252M172 205V228M217 130V200M228 120V185M262 140V180M272 130V150M295 130V155M315 120V135M340 100V125M385 215V237M395 195V225M418 200V215M505 270V305M517 235V270M538 235V255M550 235V255M562 232V250M606 255V270M618 250V262M638 245V258M695 265V295M705 250V270M716 240V255M748 225V265M760 205V225M795 258V275M828 298V345M860 378V400M872 378V390M884 352V378M893 342V368M905 335V362M917 315V335M925 295V322M948 295V310M970 278V300M1027 332V338M1037 303V332M1060 288V332"/>
          <path stroke="#1c5fc8" stroke-width="8" d="M18 160V215M40 208V242M73 170V210M85 188V198M97 188V198M107 188V222M118 222V232M150 230V258M185 200V220M205 185V205M238 100V170M250 165V185M284 150V165M305 125V140M350 115V190M360 180V220M373 215V240M407 198V215M428 200V222M440 210V225M450 228V248M462 240V265M473 245V265M485 260V290M495 292V302M528 245V270M573 235V250M583 245V270M595 258V272M628 248V260M650 245V260M662 258V300M672 285V298M683 290V298M727 235V255M740 255V285M772 222V250M783 245V260M806 262V298M815 305V345M838 305V378M850 350V378M937 295V320M960 295V305M983 285V325M1005 320V330M1017 332V340M1048 303V330"/>
          </g>
          <polyline stroke="#808080" stroke-width="3" points="15,183 130,183 250,183 350,170 420,165 600,165 740,172 880,190 1060,210"/>
          <polyline stroke="#1f9a4a" stroke-width="3" points="15,125 130,130 200,138 350,132 450,145 510,170 600,195 700,215 800,222 900,240 980,260 1060,282"/>
          <polyline stroke="#efa90f" stroke-width="7" points="20,62 100,140 190,205 250,195 310,170 420,165 500,205 590,245 650,260 730,260 780,255 830,265 880,290 950,300 1000,320 1050,335"/>
          <polyline stroke="#1a1a9a" stroke-width="3" points="20,105 60,170 110,200 150,215 210,215 280,165 340,138 400,200 460,240 530,270 600,262 700,265 800,245 840,290 900,345 950,345 1000,315 1060,312"/>
          <polyline stroke="#d820b8" stroke-width="3" points="20,135 50,215 100,195 160,240 210,200 290,140 340,130 380,190 450,250 500,270 560,245 640,260 700,265 760,240 800,265 830,300 860,360 900,345 940,300 980,310 1030,330 1060,320"/>
          <path d="M138 150V190M715 173V215" stroke="#e8261c" stroke-width="3"/>
          <polygon points="123,190 155,190 139,208" fill="#e8261c"/><polygon points="698,215 733,215 715.500,232" fill="#e8261c"/>
        </g>
      </svg>
      <i class="absolute left-[3px] top-[7px] w-[5px] h-[5px] bg-[#999] border border-[#666]"></i>
      <span class="absolute left-[15px] top-[3px] text-[#d820b8]">종가 단순 5</span>
      <span class="absolute left-[86px] top-[3px] text-[#1a1a9a]">10</span>
      <span class="absolute left-[105px] top-[3px] text-[#efa90f]">20</span>
      <span class="absolute left-[125px] top-[3px] text-[#1f9a4a]">60</span>
      <span class="absolute left-[146px] top-[3px] text-[#777]">120</span>
      <span class="absolute left-[2px] top-[31px] text-[#333] whitespace-nowrap">배당락(0.00%)</span>
      <span class="absolute left-[195px] top-[38px] text-[#333] whitespace-nowrap">배당락(0.00%)</span>
      <span class="absolute left-[289px] top-[10px] text-[#0b7ea5] font-bold text-[28px]">주봉</span>
      <span class="absolute left-[353px] top-[2px] text-[14px] text-[#e8261c] whitespace-nowrap">LC:55.67</span>
      <span class="absolute left-[353px] top-[14px] text-[14px] text-[#1c5fc8] whitespace-nowrap">HC:-36.9</span>
      <span class="absolute left-[362px] top-[34px] text-[13px] tracking-[-1px] text-[#555]">15,000</span>
      <span class="absolute left-[362px] top-[65px] text-[13px] tracking-[-1px] text-[#555]">12,500</span>
      <span class="absolute left-[362px] top-[95px] text-[13px] tracking-[-1px] text-[#555]">10,000</span>
      <span class="absolute left-[362px] top-[125px] text-[13px] tracking-[-1px] text-[#555]">7,500</span>
    </div>
    <div class="relative h-[50px] shrink-0 flex">
      <div class="w-[353px] bg-white"></div>
      <div class="flex-1 bg-[#d6e1ee]"></div>
      <svg class="absolute left-0 top-0" width="400" height="50" viewBox="415 741 400 50" fill="none" shape-rendering="crispEdges">
        <path d="M459 741V791M656 741V791" stroke="#d2d2d2"/>
        <path d="M767.500 741V791" stroke="#8e8e8e"/><path d="M768 756h6" stroke="#777"/><path d="M769.500 741V791" stroke="#999" stroke-width="3" stroke-dasharray="1 5"/>
        <path d="M415 788.500H765" stroke="#1c5fc8" stroke-width="2" stroke-dasharray="3 2"/>
        <path d="M415 788.500H765" stroke="#e8261c" stroke-width="2" stroke-dasharray="2 3" stroke-dashoffset="2"/>
        <path d="M415 786.500H765" stroke="#e8261c" stroke-dasharray="2 6"/>
        <path d="M440 787h20M490 787h13M520 787h8M523 786h8M680 786h14M690 786h20M735 786h18" stroke="#d820b8"/>
        <path d="M480 786h3M448 785h3" stroke="#e8261c"/><rect x="480" y="783" width="3" height="4" fill="#e8261c"/><rect x="515" y="783" width="3" height="4" fill="#e8261c"/><rect x="748" y="783" width="3" height="4" fill="#e8261c"/>
        <rect x="762" y="756" width="3" height="33" fill="#e8261c"/>
        <path d="M755 786l7-3" stroke="#d820b8"/>
      </svg>
      <i class="absolute left-[3px] top-[7px] w-[5px] h-[5px] bg-[#999] border border-[#666]"></i>
      <span class="absolute left-[14px] top-[3px] text-[#2f9c9c]">거래량</span>
      <span class="absolute left-[58px] top-[3px] text-[#d820b8]">단순 5</span>
      <span class="absolute left-[101px] top-[3px] text-[#efa90f]">20</span>
      <span class="absolute left-[121px] top-[3px] text-[#1f9a4a]">60</span>
      <span class="absolute left-[142px] top-[3px] text-[#777]">120</span>
      <span class="absolute left-[5px] top-[16px] text-[#333] whitespace-nowrap">10,890,554주(1,359.50%)</span>
      <span class="absolute left-[389px] top-[4px] w-[8px] h-[7px] bg-[#444] text-white text-[7px] leading-[7px] text-center">×</span>
      <span class="absolute left-[362px] top-[10px] whitespace-nowrap text-[13px] tracking-[-1px] text-[#555]">10,000K</span>
    </div>
    <div class="relative h-[18px] shrink-0 bg-[#d6e1ee] border-y border-[#8a8a8a] text-[#444] whitespace-nowrap">
      <span class="absolute left-[2px] top-[2px]">2018</span>
      <span class="absolute left-[44px] top-0 h-full pl-[2px] pt-[2px] border-l border-[#8a8a8a]">2019</span>
      <span class="absolute left-[241px] top-0 h-full pl-[2px] pt-[2px] border-l border-[#8a8a8a]">2020</span>
      <span class="absolute left-[352px] top-0 h-full pl-[8px] pt-[2px] border-l border-[#8a8a8a]">07/27</span>
    </div>
  </div>
</div>
</div>
</body></html>
